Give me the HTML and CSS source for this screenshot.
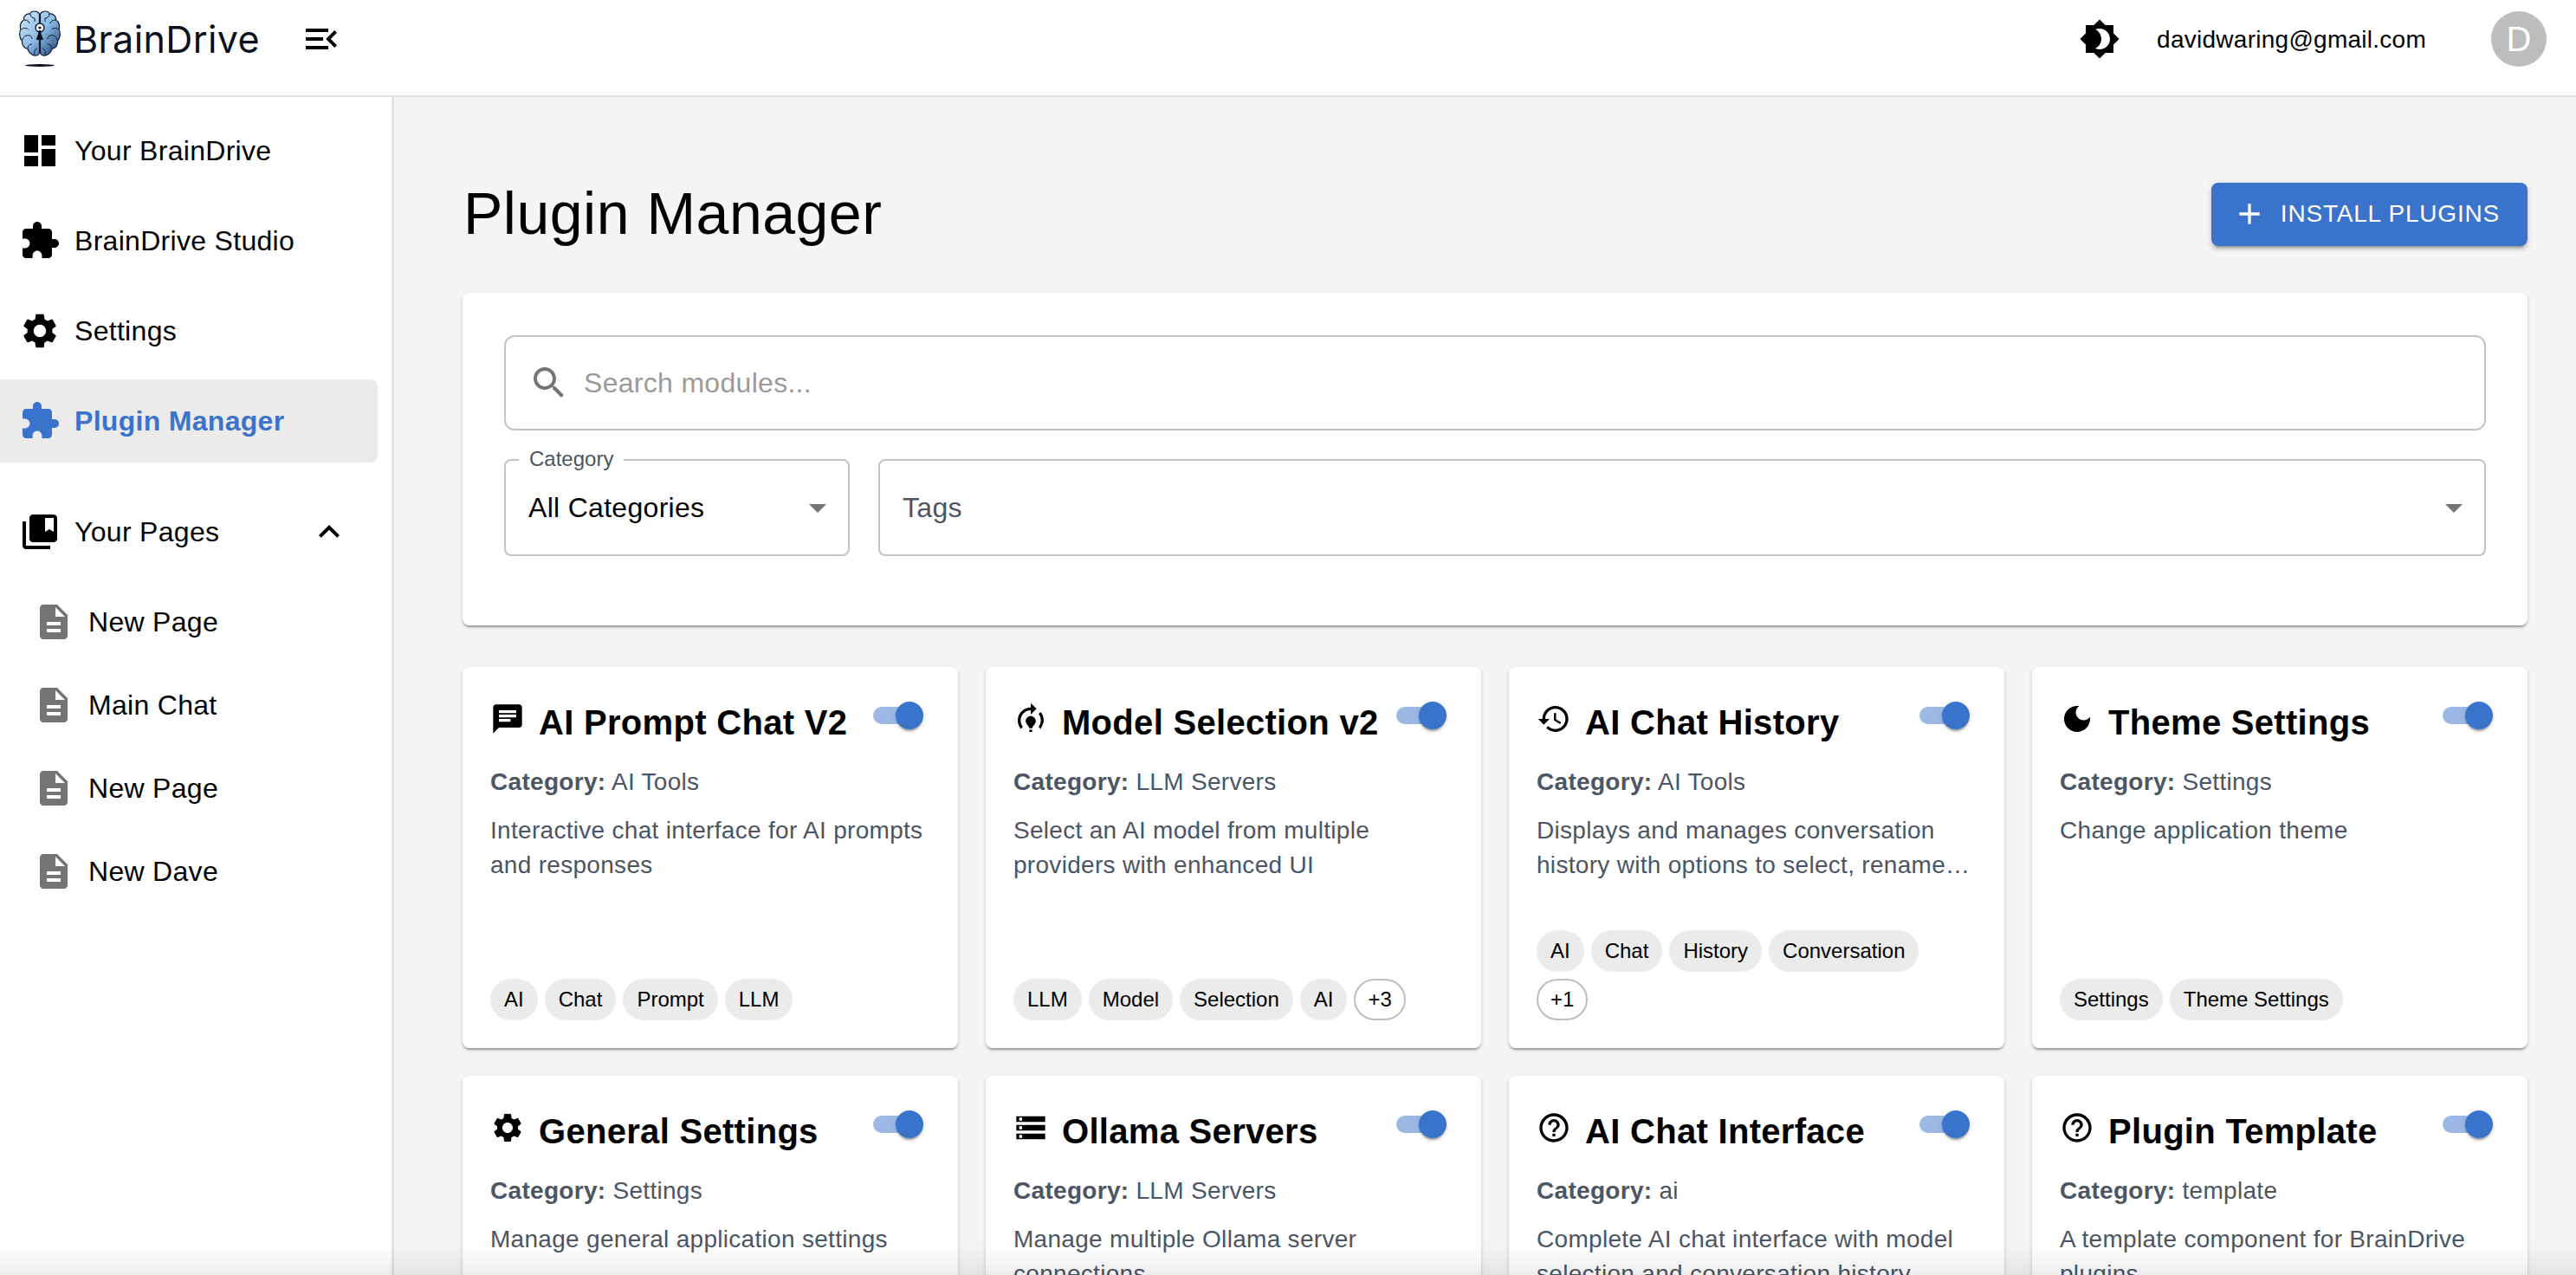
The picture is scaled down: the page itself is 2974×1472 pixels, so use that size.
FILE: index.html
```html
<!DOCTYPE html>
<html lang="en">
<head>
<meta charset="utf-8">
<title>Plugin Manager</title>
<link rel="stylesheet" href="styles.css">
</head>
<body>
<svg class="defs" aria-hidden="true">
  <symbol id="i-menu" viewBox="0 0 24 24"><path d="M3 18h13v-2H3zm0-5h10v-2H3zm0-7v2h13V6zm18 9.59L17.42 12 21 8.41 19.59 7l-5 5 5 5z"/></symbol>
  <symbol id="i-theme" viewBox="0 0 24 24"><path d="M20 8.69V4h-4.69L12 .69 8.69 4H4v4.69L.69 12 4 15.31V20h4.69L12 23.31 15.31 20H20v-4.69L23.31 12zM12 18c-.89 0-1.74-.2-2.5-.55C11.56 16.5 13 14.42 13 12s-1.44-4.5-3.5-5.45C10.26 6.2 11.11 6 12 6c3.31 0 6 2.69 6 6s-2.69 6-6 6"/></symbol>
  <symbol id="i-dash" viewBox="0 0 24 24"><path d="M3 13h8V3H3zm0 8h8v-6H3zm10 0h8V11h-8zm0-18v6h8V3z"/></symbol>
  <symbol id="i-ext" viewBox="0 0 24 24"><path d="M20.5 11H19V7c0-1.1-.9-2-2-2h-4V3.5C13 2.12 11.88 1 10.5 1S8 2.12 8 3.5V5H4c-1.1 0-1.99.9-1.99 2v3.8H3.5c1.49 0 2.7 1.21 2.7 2.7s-1.21 2.7-2.7 2.7H2V20c0 1.1.9 2 2 2h3.8v-1.5c0-1.49 1.21-2.7 2.7-2.7 1.49 0 2.7 1.21 2.7 2.7V22H17c1.1 0 2-.9 2-2v-4h1.5c1.38 0 2.5-1.12 2.5-2.5S21.88 11 20.5 11z"/></symbol>
  <symbol id="i-gear" viewBox="0 0 24 24"><path d="M19.14 12.94c.04-.3.06-.61.06-.94 0-.32-.02-.64-.07-.94l2.03-1.58c.18-.14.23-.41.12-.61l-1.92-3.32c-.12-.22-.37-.29-.59-.22l-2.39.96c-.5-.38-1.03-.7-1.62-.94l-.36-2.54c-.04-.24-.24-.41-.48-.41h-3.84c-.24 0-.43.17-.47.41l-.36 2.54c-.59.24-1.13.57-1.62.94l-2.39-.96c-.22-.08-.47 0-.59.22L2.74 8.87c-.12.21-.08.47.12.61l2.03 1.58c-.05.3-.09.63-.09.94s.02.64.07.94l-2.03 1.58c-.18.14-.23.41-.12.61l1.92 3.32c.12.22.37.29.59.22l2.39-.96c.5.38 1.03.7 1.62.94l.36 2.54c.05.24.24.41.48.41h3.84c.24 0 .44-.17.47-.41l.36-2.54c.59-.24 1.13-.56 1.62-.94l2.39.96c.22.08.47 0 .59-.22l1.92-3.32c.12-.22.07-.47-.12-.61l-2.01-1.58zM12 15.6c-1.98 0-3.6-1.62-3.6-3.6s1.62-3.6 3.6-3.6 3.6 1.62 3.6 3.6-1.62 3.6-3.6 3.6z"/></symbol>
  <symbol id="i-books" viewBox="0 0 24 24"><path d="M4 6H2v14c0 1.1.9 2 2 2h14v-2H4z"/><path d="M20 2H8c-1.1 0-2 .9-2 2v12c0 1.1.9 2 2 2h12c1.1 0 2-.9 2-2V4c0-1.1-.9-2-2-2m0 10-2.5-1.5L15 12V4h5z"/></symbol>
  <symbol id="i-less" viewBox="0 0 24 24"><path d="m12 8-6 6 1.41 1.41L12 10.83l4.59 4.58L18 14z"/></symbol>
  <symbol id="i-doc" viewBox="0 0 24 24"><path d="M14 2H6c-1.1 0-1.99.9-1.99 2L4 20c0 1.1.89 2 1.99 2H18c1.1 0 2-.9 2-2V8zm2 16H8v-2h8zm0-4H8v-2h8zm-3-5V3.5L18.5 9z"/></symbol>
  <symbol id="i-add" viewBox="0 0 24 24"><path d="M19 13h-6v6h-2v-6H5v-2h6V5h2v6h6z"/></symbol>
  <symbol id="i-search" viewBox="0 0 24 24"><path d="M15.5 14h-.79l-.28-.27C15.41 12.59 16 11.11 16 9.5 16 5.91 13.09 3 9.5 3S3 5.91 3 9.5 5.91 16 9.5 16c1.61 0 3.09-.59 4.23-1.57l.27.28v.79l5 4.99L20.49 19l-4.99-5zm-6 0C7.01 14 5 11.99 5 9.5S7.01 5 9.5 5 14 7.01 14 9.5 11.99 14 9.5 14z"/></symbol>
  <symbol id="i-drop" viewBox="0 0 24 24"><path d="M7 10l5 5 5-5z"/></symbol>
  <symbol id="i-chat" viewBox="0 0 24 24"><path d="M20 2H4c-1.1 0-1.99.9-1.99 2L2 22l4-4h14c1.1 0 2-.9 2-2V4c0-1.1-.9-2-2-2zM6 9h12v2H6V9zm8 5H6v-2h8v2zm4-6H6V6h12v2z"/></symbol>
  <symbol id="i-model" viewBox="0 0 24 24"><path d="M15.5 13.5c0 2-2.5 3.5-2.5 5h-2c0-1.5-2.5-3-2.5-5 0-1.93 1.57-3.5 3.5-3.5s3.5 1.57 3.5 3.5zm-2.5 6h-2V21h2v-1.5zm6-6.5c0 1.68-.59 3.21-1.58 4.42l1.42 1.42C20.18 16.27 21 14.72 21 13c0-2.23-.82-4.27-2.16-5.84l-1.42 1.42C18.41 9.79 19 11.32 19 13zm-3-8l-4-4v3c-4.97 0-9 4.03-9 9 0 2.23.82 4.27 2.16 5.84l1.42-1.42C5.59 16.21 5 14.68 5 13c0-3.86 3.14-7 7-7v3l4-4z"/></symbol>
  <symbol id="i-history" viewBox="0 0 24 24"><path d="M13 3c-4.97 0-9 4.03-9 9H1l3.89 3.89.07.14L9 12H6c0-3.87 3.13-7 7-7s7 3.13 7 7-3.13 7-7 7c-1.93 0-3.68-.79-4.94-2.06l-1.42 1.42C8.27 19.99 10.51 21 13 21c4.97 0 9-4.03 9-9s-4.03-9-9-9zm-1 5v5l4.28 2.54.72-1.21-3.5-2.08V8H12z"/></symbol>
  <symbol id="i-moon" viewBox="0 0 24 24"><path d="M12 3c-4.97 0-9 4.03-9 9s4.03 9 9 9 9-4.03 9-9c0-.46-.04-.92-.1-1.36-.98 1.37-2.58 2.26-4.4 2.26-2.98 0-5.4-2.42-5.4-5.4 0-1.81.89-3.42 2.26-4.4-.44-.06-.9-.1-1.36-.1z"/></symbol>
  <symbol id="i-storage" viewBox="0 0 24 24"><path d="M2 20h20v-4H2v4zm2-3h2v2H4v-2zM2 4v4h20V4H2zm4 3H4V5h2v2zm-4 7h20v-4H2v4zm2-3h2v2H4v-2z"/></symbol>
  <symbol id="i-help" viewBox="0 0 24 24"><path d="M11 18h2v-2h-2v2zm1-16C6.48 2 2 6.48 2 12s4.48 10 10 10 10-4.48 10-10S17.52 2 12 2zm0 18c-4.41 0-8-3.59-8-8s3.59-8 8-8 8 3.59 8 8-3.59 8-8 8zm0-14c-2.21 0-4 1.79-4 4h2c0-1.1.9-2 2-2s2 .9 2 2c0 2-3 1.75-3 5h2c0-2.25 3-2.5 3-5 0-2.21-1.79-4-4-4z"/></symbol>
</svg>

<div class="app">
  <header class="topbar">
    <div class="brand">
      <svg class="logo" viewBox="0 0 48 66" aria-hidden="true">
        <defs>
          <linearGradient id="brain" x1="0" y1="0" x2="1" y2="1">
            <stop offset="0" stop-color="#d3e9f9"/>
            <stop offset=".5" stop-color="#8dbce6"/>
            <stop offset="1" stop-color="#173a6c"/>
          </linearGradient>
        </defs>
        <path class="lobe" d="M23.5 4C21 0 14 0 12.5 4 8 3.5 5 7 5.5 11 2 13 .5 18 2 22-.2 26 .3 32 3.5 35 3 40 6 44 10 44.5 11 49 16 53 20 52 22 52 23.5 50 23.5 48ZM24.5 4C27 0 34 0 35.5 4 40 3.5 43 7 42.5 11 46 13 47.5 18 46 22 48.2 26 47.7 32 44.5 35 45 40 42 44 38 44.5 37 49 32 53 28 52 26 52 24.5 50 24.5 48Z"/>
        <path class="fold" d="M13 4c0 3 2 5 5 5M6 11c3 0 5 1 6 4M2.500 22c3-2 6-2 8 0M4 34c1-4 4-6 8-5 2 .5 3 2 3 4M10 44c0-3 2-5 5-5M18 51c-1-3 0-6 3-7M18 9v4M35 4c0 3-2 5-5 5M42 11c-3 0-5 1-6 4M45.500 22c-3-2-6-2-8 0M44 34c-1-4-4-6-8-5-2 .5-3 2-3 4M38 44c0-3-2-5-5-5M30 51c1-3 0-6-3-7M30 9v4"/>
        <circle class="ring" cx="24" cy="20" r="5"/>
        <circle class="pin" cx="24" cy="20" r="1.600"/>
        <path class="pin" d="M22.800 23h2.400l.3 4 2.500 7h-8.400l2.500-7z"/>
        <ellipse class="pin" cx="24" cy="63.500" rx="17" ry="1.400"/>
      </svg>
      <span class="brand-name">BrainDrive</span>
    </div>
    <svg class="icon menu-toggle"><use href="#i-menu"/></svg>
    <div class="topbar-right">
      <svg class="icon"><use href="#i-theme"/></svg>
      <span class="email">davidwaring@gmail.com</span>
      <div class="avatar">D</div>
    </div>
  </header>

  <div class="body-row">
    <nav class="sidebar">
      <a class="nav-item"><svg class="icon"><use href="#i-dash"/></svg><span>Your BrainDrive</span></a>
      <a class="nav-item"><svg class="icon"><use href="#i-ext"/></svg><span>BrainDrive Studio</span></a>
      <a class="nav-item"><svg class="icon"><use href="#i-gear"/></svg><span>Settings</span></a>
      <a class="nav-item nav-active"><svg class="icon"><use href="#i-ext"/></svg><span>Plugin Manager</span></a>
      <a class="nav-item nav-section"><svg class="icon"><use href="#i-books"/></svg><span class="grow">Your Pages</span><svg class="icon"><use href="#i-less"/></svg></a>
      <div class="page-list">
        <a class="page-item"><svg class="icon grey"><use href="#i-doc"/></svg><span>New Page</span></a>
        <a class="page-item"><svg class="icon grey"><use href="#i-doc"/></svg><span>Main Chat</span></a>
        <a class="page-item"><svg class="icon grey"><use href="#i-doc"/></svg><span>New Page</span></a>
        <a class="page-item"><svg class="icon grey"><use href="#i-doc"/></svg><span>New Dave</span></a>
      </div>
    </nav>

    <main class="content">
      <div class="title-row">
        <h1 class="page-title">Plugin Manager</h1>
        <button class="install-btn"><svg class="btn-icon"><use href="#i-add"/></svg>INSTALL PLUGINS</button>
      </div>

      <section class="filters">
        <div class="field search-field">
          <svg class="icon grey"><use href="#i-search"/></svg>
          <span class="placeholder">Search modules...</span>
        </div>
        <div class="filter-row">
          <div class="field select-field category-field">
            <span class="float-label">Category</span>
            <span class="grow">All Categories</span>
            <svg class="icon grey"><use href="#i-drop"/></svg>
          </div>
          <div class="field select-field tags-field">
            <span class="grow muted">Tags</span>
            <svg class="icon grey"><use href="#i-drop"/></svg>
          </div>
        </div>
      </section>

      <section class="card-grid">
        <article class="card">
          <div class="card-head">
            <svg class="card-icon"><use href="#i-chat"/></svg>
            <h2 class="card-title">AI Prompt Chat V2</h2>
            <span class="switch"><span class="track"></span><span class="thumb"></span></span>
          </div>
          <p class="meta"><b>Category:</b> AI Tools</p>
          <p class="desc">Interactive chat interface for AI prompts and responses</p>
          <div class="chips"><span class="chip">AI</span><span class="chip">Chat</span><span class="chip">Prompt</span><span class="chip">LLM</span></div>
        </article>
        <article class="card">
          <div class="card-head">
            <svg class="card-icon"><use href="#i-model"/></svg>
            <h2 class="card-title">Model Selection v2</h2>
            <span class="switch"><span class="track"></span><span class="thumb"></span></span>
          </div>
          <p class="meta"><b>Category:</b> LLM Servers</p>
          <p class="desc">Select an AI model from multiple providers with enhanced UI</p>
          <div class="chips"><span class="chip">LLM</span><span class="chip">Model</span><span class="chip">Selection</span><span class="chip">AI</span><span class="chip chip-more">+3</span></div>
        </article>
        <article class="card">
          <div class="card-head">
            <svg class="card-icon"><use href="#i-history"/></svg>
            <h2 class="card-title">AI Chat History</h2>
            <span class="switch"><span class="track"></span><span class="thumb"></span></span>
          </div>
          <p class="meta"><b>Category:</b> AI Tools</p>
          <p class="desc">Displays and manages conversation history with options to select, rename and delete conversations</p>
          <div class="chips"><span class="chip">AI</span><span class="chip">Chat</span><span class="chip">History</span><span class="chip">Conversation</span><span class="chip chip-more">+1</span></div>
        </article>
        <article class="card">
          <div class="card-head">
            <svg class="card-icon"><use href="#i-moon"/></svg>
            <h2 class="card-title">Theme Settings</h2>
            <span class="switch"><span class="track"></span><span class="thumb"></span></span>
          </div>
          <p class="meta"><b>Category:</b> Settings</p>
          <p class="desc">Change application theme</p>
          <div class="chips"><span class="chip">Settings</span><span class="chip">Theme Settings</span></div>
        </article>
        <article class="card">
          <div class="card-head">
            <svg class="card-icon"><use href="#i-gear"/></svg>
            <h2 class="card-title">General Settings</h2>
            <span class="switch"><span class="track"></span><span class="thumb"></span></span>
          </div>
          <p class="meta"><b>Category:</b> Settings</p>
          <p class="desc">Manage general application settings</p>
        </article>
        <article class="card">
          <div class="card-head">
            <svg class="card-icon"><use href="#i-storage"/></svg>
            <h2 class="card-title">Ollama Servers</h2>
            <span class="switch"><span class="track"></span><span class="thumb"></span></span>
          </div>
          <p class="meta"><b>Category:</b> LLM Servers</p>
          <p class="desc">Manage multiple Ollama server connections</p>
        </article>
        <article class="card">
          <div class="card-head">
            <svg class="card-icon"><use href="#i-help"/></svg>
            <h2 class="card-title">AI Chat Interface</h2>
            <span class="switch"><span class="track"></span><span class="thumb"></span></span>
          </div>
          <p class="meta"><b>Category:</b> ai</p>
          <p class="desc">Complete AI chat interface with model selection and conversation history</p>
        </article>
        <article class="card">
          <div class="card-head">
            <svg class="card-icon"><use href="#i-help"/></svg>
            <h2 class="card-title">Plugin Template</h2>
            <span class="switch"><span class="track"></span><span class="thumb"></span></span>
          </div>
          <p class="meta"><b>Category:</b> template</p>
          <p class="desc">A template component for BrainDrive plugins</p>
        </article>
      </section>
    </main>
  </div>
  <div class="bottom-fade"></div>
</div>
</body>
</html>
```
FILE: styles.css
```css
* { box-sizing: border-box; }
html, body { margin: 0; height: 100%; overflow: hidden; }
body { font-family: "Liberation Sans", Arial, sans-serif; color: #000; background: #f5f5f5; }
.defs { width: 0; height: 0; position: absolute; }

.app { position: relative; height: 1472px; display: flex; flex-direction: column; overflow: hidden; }

.icon { width: 48px; height: 48px; flex: none; fill: currentColor; display: block; }
.grey { fill: #757575; }
.grow { flex: 1; min-width: 0; }

/* top bar */
.topbar { flex: none; height: 112px; padding: 0 34px 20px 22px; background: #fff; border-bottom: 2px solid #e0e0e0; display: flex; align-items: center; }
.brand { display: flex; align-items: center; width: 325px; }
.logo { width: 48px; height: 66px; flex: none; }
.lobe { fill: url(#brain); stroke: #101c33; stroke-width: 1.2; }
.fold { fill: none; stroke: #101c33; stroke-width: 1; }
.ring { fill: #fff; stroke: #101c33; stroke-width: 1.4; }
.pin { fill: #0b1020; }
.brand-name { margin-left: 15px; font-family: Inter, "Liberation Sans", sans-serif; font-weight: 400; font-size: 43px; letter-spacing: .4px; color: #0b1020; line-height: 1; }
.topbar-right { margin-left: auto; display: flex; align-items: center; }
.email { margin-left: 42px; margin-right: 75px; padding-top: 2px; font-size: 28px; letter-spacing: .26px; }
.avatar { width: 64px; height: 64px; border-radius: 50%; background: #bdbdbd; color: #fff; font-size: 40px; display: flex; align-items: center; justify-content: center; }

/* layout */
.body-row { flex: 1; min-height: 0; display: flex; }

/* sidebar */
.sidebar { flex: none; width: 455px; padding: 14px 16px 0 0; background: #fff; border-right: 3px solid #e4e4e4; }
.nav-item { height: 96px; margin-bottom: 8px; padding-left: 22px; display: flex; align-items: center; gap: 16px; font-size: 32px; letter-spacing: .3px; border-radius: 0 8px 8px 0; }
.nav-active { background: #ebebeb; color: #3a73cc; font-weight: 700; margin-bottom: 0; }
.nav-section { margin-top: 32px; padding-right: 32px; }
.page-item { height: 96px; padding-left: 38px; display: flex; align-items: center; gap: 16px; font-size: 32px; letter-spacing: .3px; }

/* content */
.content { flex: 1; min-width: 0; padding: 93px 56px 0 79px; }
.title-row { display: flex; align-items: center; justify-content: space-between; margin-bottom: 49px; }
.page-title { margin: 0; padding: 0 0 2px 1px; font-size: 68px; font-weight: 400; line-height: 82px; letter-spacing: .5px; }
.install-btn { height: 73px; padding: 0 32px 0 24px; border: 0; border-radius: 8px; background: #3a73cc; color: #fff; font: 400 28px "Liberation Sans", Arial, sans-serif; letter-spacing: .8px; display: flex; align-items: center; box-shadow: 0 6px 2px -4px rgba(0,0,0,.2), 0 4px 4px 0 rgba(0,0,0,.14), 0 2px 10px 0 rgba(0,0,0,.12); }
.btn-icon { width: 40px; height: 40px; margin-right: 16px; fill: #fff; }

/* filters */
.filters { padding: 49px 48px 80px 48px; background: #fff; border-radius: 8px; box-shadow: 0 4px 2px -2px rgba(0,0,0,.2), 0 2px 2px 0 rgba(0,0,0,.14), 0 2px 6px 0 rgba(0,0,0,.12); margin-bottom: 48px; }
.field { position: relative; display: flex; align-items: center; border: 2px solid #c4c4c4; border-radius: 8px; font-size: 32px; letter-spacing: .3px; }
.search-field { height: 110px; padding-left: 26px; gap: 16px; border-radius: 12px; margin-bottom: 33px; }
.placeholder { color: #9a9a9a; }
.filter-row { display: flex; gap: 33px; }
.select-field { height: 112px; padding: 0 11px 0 26px; }
.category-field { width: 399px; flex: none; }
.tags-field { flex: 1; }
.muted { color: #4b5563; }
.float-label { position: absolute; top: -16px; left: 15px; padding: 0 12px; background: #fff; font-size: 24px; line-height: 28px; letter-spacing: 0; color: #4b5563; }

/* cards */
.card-grid { display: grid; grid-template-columns: repeat(4, 1fr); grid-auto-rows: 440px; gap: 32px; }
.card { display: flex; flex-direction: column; padding: 32px; background: #fff; border-radius: 8px; box-shadow: 0 4px 2px -2px rgba(0,0,0,.2), 0 2px 2px 0 rgba(0,0,0,.14), 0 2px 6px 0 rgba(0,0,0,.12); }
.card-head { display: flex; align-items: flex-start; margin-bottom: 17px; }
.card-icon { flex: none; width: 40px; height: 40px; margin: 8px 16px 0 0; fill: #000; }
.card-title { flex: 1; min-width: 0; margin: 0; font-size: 40px; font-weight: 700; line-height: 64px; letter-spacing: .3px; white-space: nowrap; }
.switch { position: relative; flex: none; width: 80px; height: 48px; }
.track { position: absolute; left: 14px; top: 14px; width: 52px; height: 20px; border-radius: 10px; background: #9cb9e6; }
.thumb { position: absolute; left: 40px; top: 8px; width: 32px; height: 32px; border-radius: 50%; background: #3a73cc; box-shadow: 0 4px 2px -2px rgba(0,0,0,.2), 0 2px 2px 0 rgba(0,0,0,.14), 0 2px 6px 0 rgba(0,0,0,.12); }
.meta { margin: 0 0 16px; font-size: 28px; line-height: 40px; letter-spacing: .3px; color: #4b5563; }
.meta b { font-weight: 700; }
.desc { margin: 0; font-size: 28px; line-height: 40px; letter-spacing: .3px; color: #4b5563; display: -webkit-box; -webkit-box-orient: vertical; -webkit-line-clamp: 2; overflow: hidden; }
.chips { margin-top: auto; display: flex; flex-wrap: wrap; gap: 8px; }
.chip { height: 48px; padding: 0 16px; border-radius: 24px; background: #ebebeb; font-size: 24px; display: flex; align-items: center; }
.chip-more { background: #fff; border: 2px solid #bdbdbd; padding: 0 14px; }

.bottom-fade { position: absolute; left: 0; right: 0; bottom: 0; height: 36px; background: linear-gradient(rgba(0,0,0,0), rgba(0,0,0,.07)); pointer-events: none; }
```
